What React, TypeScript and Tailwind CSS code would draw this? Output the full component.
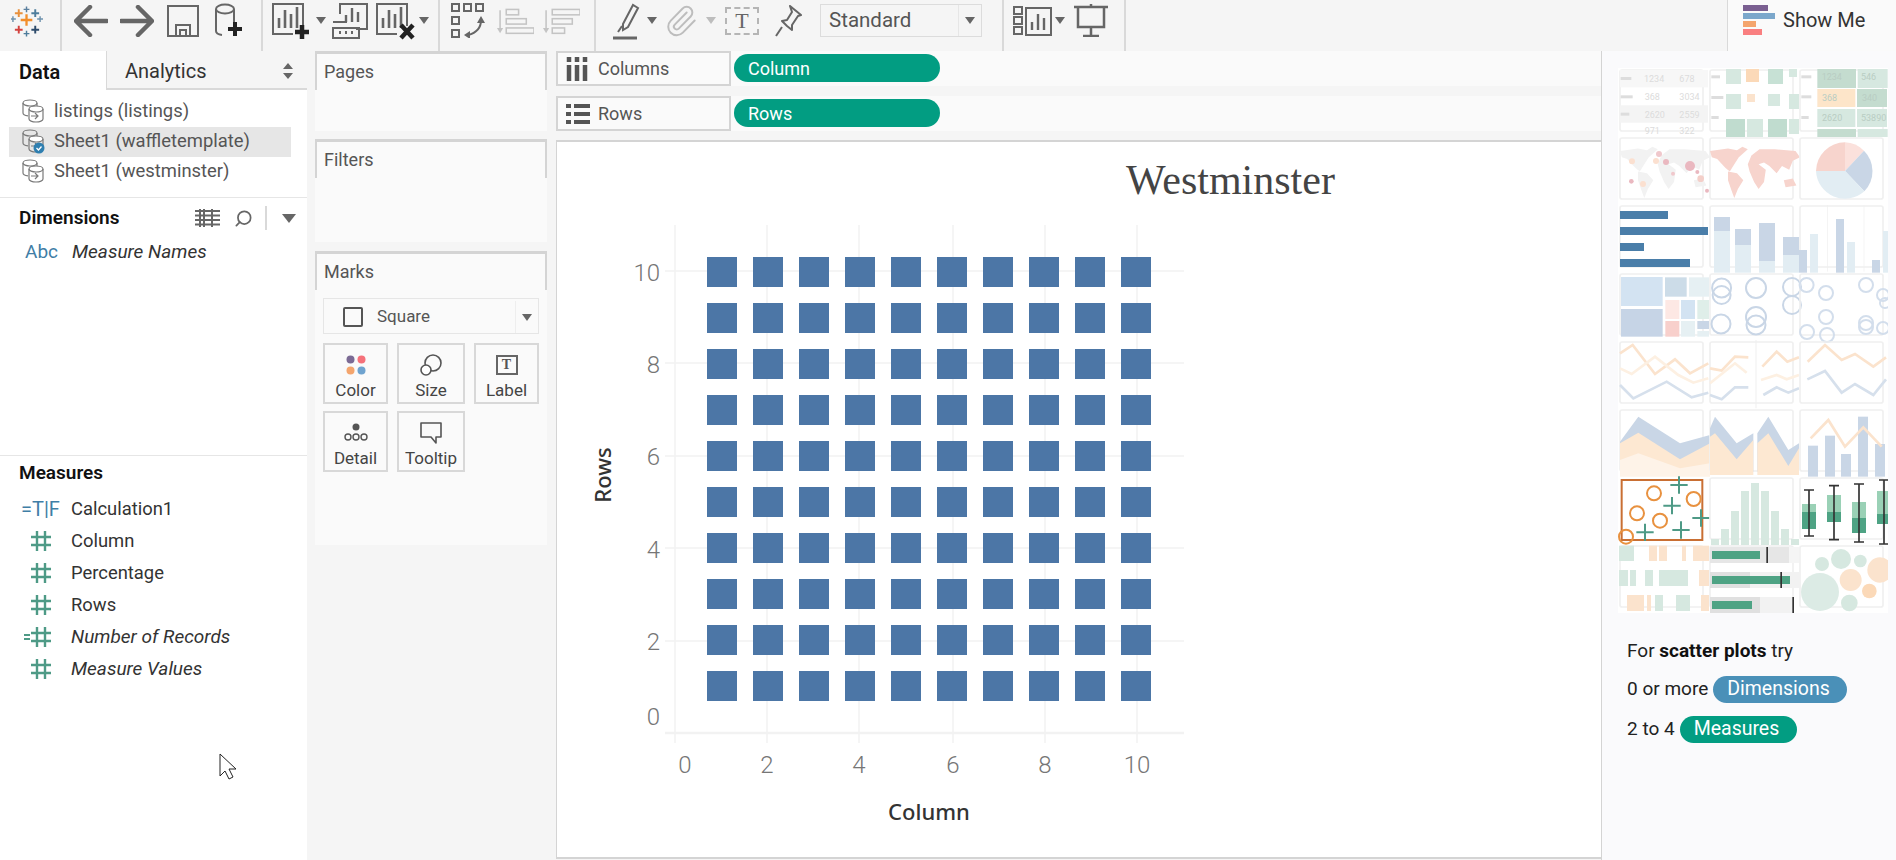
import type { ReactNode } from "react";
import { Paperclip, Search } from "lucide-react";

const GRAY = "#666666";

function Arrow({ color = GRAY }: { color?: string }) {
  return (
    <svg width="10" height="7" viewBox="0 0 10 7" className="shrink-0">
      <path d="M0 0h10L5 7z" fill={color} />
    </svg>
  );
}

function Logo() {
  const marks: [number, number, number, string, number][] = [
    [16, 6, 3, "#5a7f9e", 1.5],
    [8, 10, 4, "#e8903c", 2],
    [25, 10, 4, "#4e7d9c", 2],
    [2, 16, 3, "#6f93ae", 1.5],
    [16, 17, 6, "#f28e2b", 2.4],
    [30, 16, 3, "#6f93ae", 1.5],
    [8, 27, 4, "#d3423f", 2],
    [25, 27, 4, "#2d4b6b", 2],
    [16, 31, 3, "#4e7d9c", 1.5],
  ];
  return (
    <svg width="32" height="36" viewBox="0 0 33 36" className="ml-[11px]">
      {marks.map(([x, y, s, c, w]) => (
        <path key={`${x}-${y}`} d={`M${x - s} ${y}h${s * 2}M${x} ${y - s}v${s * 2}`} stroke={c} strokeWidth={w} fill="none" />
      ))}
    </svg>
  );
}

function ArrowIcon({ flip, className }: { flip?: boolean; className: string }) {
  return (
    <svg width="34" height="32" viewBox="0 0 34 32" className={className}>
      <path
        d={flip ? "M1 16h30M18 2l14 14-14 14" : "M33 16H3M16 2L2 16l14 14"}
        stroke={GRAY}
        strokeWidth="4.5"
        fill="none"
        strokeLinecap="round"
        strokeLinejoin="round"
      />
    </svg>
  );
}

function ChartBox({ extra, className }: { extra?: "plus" | "x"; className: string }) {
  return (
    <svg width="40" height="38" viewBox="0 0 40 38" className={className}>
      <path d="M31 24V2H1v30h20" stroke={GRAY} strokeWidth="2" fill="none" />
      <path d="M7 26V16M13 26V8M19 26V12M25 26V5" stroke={GRAY} strokeWidth="2.6" fill="none" />
      {extra === "plus" && <path d="M30 23v14M23 30h14" stroke="#222" strokeWidth="4.5" />}
      {extra === "x" && <path d="M25 23l12 13M37 23L25 36" stroke="#222" strokeWidth="4.5" />}
    </svg>
  );
}

function DuplicateIcon({ className }: { className: string }) {
  return (
    <svg width="36" height="36" viewBox="0 0 36 36" className={className}>
      <path d="M8 11V1h27v25H24" stroke={GRAY} strokeWidth="2" fill="none" />
      <path d="M14 19v-7M20 19V5M26 19V9" stroke={GRAY} strokeWidth="2.4" />
      <rect x="1" y="25" width="26" height="10" fill="none" stroke={GRAY} strokeWidth="2" />
      <path d="M1 19h14M8 31v-3M14 31v-3M20 31v-3" stroke={GRAY} strokeWidth="2" />
    </svg>
  );
}

function SortIcon({ flip, className }: { flip?: boolean; className: string }) {
  const bars = flip
    ? [
        [12, 3, 36],
        [12, 15, 26],
        [12, 27, 16],
      ]
    : [
        [12, 3, 16],
        [12, 15, 26],
        [12, 27, 36],
      ];
  return (
    <svg width="37" height="34" viewBox="0 0 48 36" className={className}>
      {bars.map(([x, y, w]) => (
        <rect key={y} x={x} y={y} width={w} height="7" fill="none" stroke="#c4c4c4" strokeWidth="2" />
      ))}
      <path d="M4 4v24" stroke="#c4c4c4" strokeWidth="2" />
      <path d="M0 27h8l-4 7z" fill="#c4c4c4" />
    </svg>
  );
}

function DataSourceIcon({ check }: { check?: boolean }) {
  return (
    <svg width="24" height="26" viewBox="0 0 24 26" className="shrink-0">
      <ellipse cx="9" cy="5" rx="7" ry="3" fill="none" stroke="#7a7a7a" strokeWidth="1.2" />
      <path d="M2 5v10c0 1.5 2 2.6 5 2.8M16 5v4" fill="none" stroke="#7a7a7a" strokeWidth="1.2" />
      <ellipse cx="15" cy="11" rx="7" ry="3" fill="white" stroke="#7a7a7a" strokeWidth="1.2" />
      <path d="M8 11v10c0 1.6 3 3 7 3s7-1.4 7-3V11" fill="none" stroke="#7a7a7a" strokeWidth="1.2" />
      <path d="M10 18h7M14 15l3 3-3 3" fill="none" stroke="#7a7a7a" strokeWidth="1.2" />
      {check && (
        <>
          <circle cx="18" cy="20" r="5.5" fill="#2f7fb0" />
          <path d="M15.5 20l2 2 3-3.5" stroke="white" strokeWidth="1.3" fill="none" />
        </>
      )}
    </svg>
  );
}

function HashIcon({ calc }: { calc?: boolean }) {
  return (
    <svg width="34" height="24" viewBox="0 0 34 24" className="shrink-0">
      {calc && <path d="M2 10h6M2 14h6" stroke="#4e9a86" strokeWidth="2" />}
      <path d="M15 2v20M23 2v20M9 8h20M9 16h20" stroke="#4e9a86" strokeWidth="2.4" />
    </svg>
  );
}

function Card({ title, className, children }: { title: string; className: string; children?: ReactNode }) {
  return (
    <div className={`bg-[#fafafa] ${className}`}>
      <div className="flex h-[39px] items-center border-x-2 border-t-[3px] border-[#d4d4d4] pb-[2px] pl-[7px] text-[18px] text-[#555555]">
        {title}
      </div>
      {children}
    </div>
  );
}

function MarkButton({ label, icon }: { label: string; icon: ReactNode }) {
  return (
    <div className="flex h-[61px] flex-col items-center border-2 border-[#d8d8d8] pt-[6px] text-[17px] leading-[22px] text-[#444444]">
      <div className="flex h-[28px] items-center">{icon}</div>
      {label}
    </div>
  );
}

function Shelf({ label, icon, pill }: { label: string; icon: ReactNode; pill: string }) {
  return (
    <div className="flex h-[35px] items-stretch bg-[#fafafa]">
      <div className="flex w-[175px] items-center border-2 border-[#d4d4d4] pl-[8px] text-[18px] text-[#555555]">
        <div className="w-[32px]">{icon}</div>
        {label}
      </div>
      <div className="ml-[3px] mt-[3px] flex h-[28px] w-[206px] items-center rounded-full bg-[#029d82] pl-[14px] text-[18px] text-white">
        {pill}
      </div>
    </div>
  );
}

const X_TICKS = [
  [0, 675, 685],
  [2, 767, 767],
  [4, 859, 859],
  [6, 953, 953],
  [8, 1045, 1045],
  [10, 1137, 1137],
];
const Y_TICKS = [
  [10, 271, 273],
  [8, 363, 365],
  [6, 456, 457],
  [4, 548, 550],
  [2, 641, 642],
  [0, 733, 717],
];

function WaffleChart() {
  const cells = Array.from({ length: 10 }, (_, i) => i);
  return (
    <svg width="620" height="640" viewBox="590 201 620 640" className="ml-[33px]">
      {X_TICKS.map(([v, x]) => (
        <path key={v} d={`M${x} 225V743`} stroke="#f2f2f2" strokeWidth="1.5" />
      ))}
      {Y_TICKS.map(([v, y]) => (
        <path key={v} d={`M665 ${y}H1184`} stroke="#f2f2f2" strokeWidth={v === 0 ? 2.5 : 1.5} />
      ))}
      {cells.map((r) =>
        cells.map((c) => <rect key={`${r}-${c}`} x={707 + 46 * c} y={257 + 46 * r} width="30" height="30" fill="#4c76a6" />),
      )}
      <g fontFamily="Roboto, sans-serif" fontWeight="300" fontSize="24" fill="#767676">
        {Y_TICKS.map(([v, , ty]) => (
          <text key={v} x="660" y={ty + 8} textAnchor="end">
            {v}
          </text>
        ))}
        {X_TICKS.map(([v, , tx]) => (
          <text key={v} x={tx} y="773" textAnchor="middle">
            {v}
          </text>
        ))}
      </g>
      <g fontFamily="'Noto Sans', sans-serif" fontWeight="500" fontSize="22" fill="#333333" textAnchor="middle">
        <text x="929" y="820">
          Column
        </text>
        <text transform="translate(611 475) rotate(-90)">Rows</text>
      </g>
    </svg>
  );
}

const O = "#fbe3cd";
const G = "#d6e8e0";
const B = "#c9d6e6";
const L = "#e2edf3";
const P = "#f7d4cd";

// thumbnails are drawn at 3x, in coordinates measured from the sidebar corner (x-1580, y)
function Thumb({ c, r, low, selected, children }: { c: number; r: number; low?: boolean; selected?: boolean; children?: ReactNode }) {
  const x = (40 + 90 * c) * 3;
  const y = (70 + 68 * r) * 3;
  return (
    <svg width="83" height="61" viewBox={`${x} ${y} 249 183`} className="overflow-visible">
      {!selected && <rect x={x} y={y} width="249" height="183" rx="6" fill="none" stroke="#f0f0f0" strokeWidth="5" />}
      <g transform={low ? "translate(60 900)" : undefined}>{children}</g>
    </svg>
  );
}

function Bars({ items }: { items: [number, number, number, number, string][] }) {
  return (
    <>
      {items.map(([x, y, w, h, f]) => (
        <rect key={`${x}-${y}-${w}`} x={x} y={y} width={w} height={h} fill={f} />
      ))}
    </>
  );
}

function Lines({ items }: { items: [string, string, number?][] }) {
  return (
    <>
      {items.map(([pts, color, w]) => (
        <polyline key={pts} points={pts} fill="none" stroke={color} strokeWidth={w ?? 8} />
      ))}
    </>
  );
}

function WorldMap({ x, fill }: { x: number; fill: string }) {
  return (
    <g transform={`translate(${x} 440) scale(2.7 2.65)`} fill={fill}>
      <path d="M0 5L20 2L30 4L36 0L42 3L32 12L27 20L22 28L17 24L8 14L2 12Z" />
      <path d="M20 28L30 30L37 38L31 48L27 58L24 50L20 38Z" />
      <path d="M46 10L55 3L72 3L95 5L100 12L92 16L88 26L80 22L74 30L66 22L60 18L54 20L62 26L60 40L54 48L49 40L44 28L42 20Z" />
      <path d="M82 38L92 36L96 44L84 46Z" />
    </g>
  );
}

function Gallery() {
  const tableText: [string, number, number][] = [
    ["1234", 192, 245],
    ["678", 298, 245],
    ["368", 194, 299],
    ["3034", 298, 299],
    ["2620", 194, 353],
    ["2559", 298, 353],
    ["971", 194, 401],
    ["322", 298, 401],
  ];
  const heatText: [string, number, number][] = [
    ["1234", 725, 240],
    ["546", 843, 240],
    ["368", 726, 304],
    ["340", 846, 304],
    ["2620", 726, 364],
    ["53890", 843, 364],
  ];
  const mapDots: [number, number, number, string][] = [
    [237, 462, 9, "#f0c8cc"],
    [258, 486, 9, "#eab8c0"],
    [330, 498, 15, "#eab8c0"],
    [352, 516, 6, "#eab8c0"],
    [362, 536, 10, "#f4cfc9"],
    [279, 521, 6, "#f0c8cc"],
    [154, 544, 7, "#eab8c0"],
    [381, 572, 6, "#eab8c0"],
    [156, 484, 9, "#fbe0d0"],
    [228, 483, 9, "#fbe0d0"],
    [189, 552, 9, "#fbe0d0"],
  ];
  const circles: [number, number, number][] = [
    [1721.6, 288, 9.5],
    [1721.6, 295, 9],
    [1756, 288, 10],
    [1792, 287, 9],
    [1721, 324, 9.5],
    [1756, 317, 10],
    [1756, 325, 9.5],
    [1792, 305, 9],
    [1806.6, 285, 7],
    [1826, 293, 7],
    [1866, 285, 7],
    [1883, 295, 6],
    [1826, 317, 7],
    [1807, 332, 7],
    [1827, 335, 7],
    [1866, 323, 7],
    [1866, 327, 7],
    [1883, 328, 6],
    [1885, 303, 5],
  ];
  const box: [number, number, number, number, number, number, number][] = [
    [606, 42, 612, 636, 687, 570, 708],
    [681, 42, 585, 636, 666, 557, 719],
    [756, 42, 606, 654, 699, 552, 726],
    [831, 42, 573, 642, 672, 540, 732],
  ];
  return (
    <div className="ml-[16px] h-[545px] w-[270px] overflow-hidden bg-white pl-[2px] pt-[2px]">
      <div className="grid grid-cols-[83px_83px_83px] gap-x-[7px] gap-y-[7px]">
        <Thumb c={0} r={0}>
          <Bars items={[[120, 210, 264, 52, "#f7f7f7"], [120, 316, 264, 52, "#f4f4f4"], [122, 231, 32, 9, "#dddddd"], [122, 286, 36, 9, "#dddddd"], [122, 338, 26, 9, "#dddddd"]]} />
          {tableText.map(([t, x, y]) => (
            <text key={t} x={x} y={y} fontSize="27" fill="#dcdcdc">
              {t}
            </text>
          ))}
        </Thumb>
        <Thumb c={1} r={0}>
          <Bars items={[[394, 226, 26, 9, "#dddddd"], [394, 288, 36, 9, "#dddddd"], [394, 348, 22, 9, "#dddddd"], [438, 207, 45, 45, G], [498, 207, 39, 39, "#fbd9b8"], [564, 207, 45, 45, "#c7e1d5"], [627, 207, 24, 24, G], [438, 282, 45, 45, G], [501, 282, 24, 24, O], [564, 282, 36, 36, G], [627, 282, 30, 45, G], [438, 357, 57, 54, "#c0dccf"], [501, 357, 48, 54, G], [564, 357, 57, 54, "#c0dccf"], [627, 357, 30, 45, G]]} />
        </Thumb>
        <Thumb c={2} r={0}>
          <Bars items={[[664, 226, 30, 9, "#dddddd"], [664, 286, 30, 9, "#dddddd"], [664, 348, 22, 9, "#dddddd"], [712, 207, 116, 57, "#c4dccf"], [833, 207, 90, 57, G], [712, 267, 114, 54, "#fde5c9"], [831, 267, 90, 54, "#c4dccf"], [712, 327, 114, 54, G], [831, 327, 90, 54, G], [712, 387, 116, 24, "#c4dccf"], [833, 387, 90, 24, G]]} />
          {heatText.map(([t, x, y]) => (
            <text key={t} x={x} y={y} fontSize="27" fill="#b9cdc3">
              {t}
            </text>
          ))}
        </Thumb>

        <Thumb c={0} r={1}>
          <WorldMap x={120} fill="#f2f2f2" />
          {mapDots.map(([x, y, d, f]) => (
            <circle key={`${x}-${y}`} cx={x} cy={y} r={d} fill={f} />
          ))}
        </Thumb>
        <Thumb c={1} r={1}>
          <WorldMap x={390} fill={P} />
        </Thumb>
        <Thumb c={2} r={1}>
          <path d="M795 513L795 427A87 87 0 0 0 708 513Z" fill={P} />
          <path d="M795 513L795 427A87 87 0 0 1 852 452Z" fill="#fbe1dc" />
          <path d="M795 513L852 452A87 87 0 0 1 853 574Z" fill={B} />
          <path d="M795 513L853 574A87 87 0 0 1 708 513Z" fill={L} />
        </Thumb>

        <Thumb c={0} r={2}>
          <Bars items={[[120, 633, 144, 24, "#4a7ea9"], [120, 681, 264, 24, "#4a7ea9"], [120, 729, 72, 24, "#4a7ea9"], [120, 777, 210, 24, "#4a7ea9"]]} />
        </Thumb>
        <Thumb c={1} r={2}>
          <Bars items={[[402, 651, 48, 42, B], [402, 693, 48, 125, L], [465, 687, 48, 48, B], [465, 735, 48, 83, L], [537, 669, 48, 114, B], [537, 783, 48, 35, L], [609, 711, 48, 54, B], [609, 765, 48, 53, L]]} />
        </Thumb>
        <Thumb c={2} r={2}>
          <Bars items={[[741, 615, 2, 200, "#efefef"], [851, 615, 2, 200, "#efefef"], [657, 750, 24, 68, B], [690, 702, 24, 116, L], [768, 657, 24, 161, B], [801, 726, 24, 92, L], [876, 780, 24, 38, B], [909, 693, 24, 125, L]]} />
        </Thumb>

        <Thumb c={0} r={3}>
          <Bars items={[[123, 831, 125, 87, "#d3e3f2"], [123, 927, 125, 83, "#c6d4e6"], [255, 832, 65, 58, "#ccdce8"], [327, 832, 60, 58, "#e6f0f3"], [256, 900, 42, 57, "#fde8e4"], [256, 963, 42, 47, "#f8d0cc"], [303, 900, 42, 57, "#d3e3f2"], [352, 900, 35, 57, "#dfeee9"], [303, 963, 42, 47, "#e6f0f3"], [352, 963, 35, 24, B], [352, 993, 35, 17, "#e6f0f3"]]} />
        </Thumb>
        <Thumb c={1} r={3}>
          <g transform="scale(3) translate(-1580 0)" fill="none" stroke={B} strokeWidth="2">
            {circles.slice(0, 8).map(([x, y, d]) => (
              <circle key={`${x}-${y}`} cx={x} cy={y} r={d} />
            ))}
          </g>
        </Thumb>
        <Thumb c={2} r={3}>
          <g transform="scale(3) translate(-1580 0)" fill="none" stroke="#d3deec" strokeWidth="2">
            {circles.slice(8).map(([x, y, d]) => (
              <circle key={`${x}-${y}`} cx={x} cy={y} r={d} />
            ))}
          </g>
        </Thumb>

        <Thumb c={0} r={4} low>
          <Lines items={[["60,160 98,135 165,222 225,178 270,220 325,190", O], ["60,205 95,222 165,170 235,225 280,248 325,235", "#fdf0e2"], ["60,255 100,295 200,245 275,292 325,278", "#d6e0ec"]]} />
        </Thumb>
        <Thumb c={1} r={4} low>
          <path d="M468 120V325" stroke="#efefef" strokeWidth="3" />
          <Lines items={[["330,205 365,212 405,170 445,172", O], ["330,250 405,190 440,218", "#fdf0e2"], ["330,285 365,298 405,262 445,262", "#d6e0ec"], ["487,200 530,155 562,185 597,172", O], ["483,240 530,225 560,238 597,225", "#fdf0e2"], ["490,285 530,262 565,278 597,265", "#d6e0ec"]]} />
        </Thumb>
        <Thumb c={2} r={4} low>
          <Lines items={[["623,185 675,135 725,180 765,162 820,200 858,172", O], ["622,238 675,213 725,278 765,252 820,285 858,238", "#d6e0ec"]]} />
        </Thumb>

        <Thumb c={0} r={5} low>
          <path d="M60 425L115 350L240 430L330 405V515H60Z" fill={B} />
          <path d="M60 430L115 398L240 478L330 430V525H60Z" fill="#fde8d2" />
          <path d="M60 480L115 460L240 505L330 490V530H60Z" fill="#fef3e8" />
        </Thumb>
        <Thumb c={1} r={5} low>
          <path d="M330 385L345 350L410 430L460 400V515H330Z" fill={B} />
          <path d="M330 410L345 400L410 478L460 420V525H330Z" fill="#fde8d2" />
          <path d="M472 400L505 350L565 450L597 430V515H472Z" fill={B} />
          <path d="M472 430L505 400L565 498L597 445V525H472Z" fill="#fde8d2" />
        </Thumb>
        <Thumb c={2} r={5} low>
          <Bars items={[[624, 437, 30, 93, B], [675, 407, 30, 123, B], [723, 462, 30, 68, B], [774, 350, 30, 180, B], [825, 432, 30, 98, B]]} />
          <Lines items={[["632,415 685,360 735,440 790,382 845,440", O]]} />
        </Thumb>

        <Thumb c={0} r={6} low selected>
          <rect x="65" y="540" width="242" height="180" fill="none" stroke="#c96f33" strokeWidth="6" />
          {[[162, 580], [281, 597], [111, 640], [180, 662], [78, 710]].map(([x, y]) => (
            <circle key={x} cx={x} cy={y} r="21" fill="none" stroke="#e8913f" strokeWidth="6" />
          ))}
          {[[237, 555], [216, 617], [135, 697], [243, 690], [303, 654]].map(([x, y]) => (
            <path key={x} d={`M${x - 26} ${y}h52M${x} ${y - 26}v52`} stroke="#4e9a86" strokeWidth="6" />
          ))}
        </Thumb>
        <Thumb c={1} r={6} low>
          <Bars items={[[333, 717, 24, 18, G], [363, 687, 24, 48, G], [393, 633, 24, 102, G], [423, 573, 24, 162, G], [453, 549, 24, 186, G], [483, 573, 24, 162, G], [513, 633, 24, 102, G], [543, 687, 24, 48, G], [573, 717, 24, 18, G]]} />
        </Thumb>
        <Thumb c={2} r={6} low>
          {box.map(([x, w, t, m, b, wt, wb]) => (
            <g key={x}>
              <rect x={x} y={t} width={w} height={m - t} fill="#9ad1b6" />
              <rect x={x} y={m} width={w} height={b - m} fill="#4ea384" />
              <path d={`M${x + 21} ${wt}V${wb}M${x + 6} ${wt}h30M${x + 6} ${wb}h30`} stroke="#333333" strokeWidth="5" fill="none" />
            </g>
          ))}
        </Thumb>

        <Thumb c={0} r={7} low>
          <Bars items={[[57, 737, 45, 46, G], [147, 737, 24, 46, O], [177, 737, 24, 46, O], [246, 737, 12, 46, O], [279, 737, 48, 46, O], [57, 810, 27, 48, G], [90, 810, 18, 48, G], [135, 810, 24, 48, G], [177, 810, 87, 48, G], [297, 810, 30, 48, O], [81, 885, 51, 48, O], [141, 885, 12, 48, O], [165, 885, 24, 48, G], [228, 885, 42, 48, G], [303, 885, 24, 48, O]]} />
        </Thumb>
        <Thumb c={1} r={7} low>
          <Bars items={[[330, 741, 237, 48, "#e6e6e6"], [567, 741, 30, 48, "#f5f5f5"], [336, 753, 144, 24, "#4ea384"], [499, 741, 5, 48, "#333333"], [330, 816, 120, 48, "#e0e0e0"], [450, 816, 147, 48, "#f2f2f2"], [336, 828, 234, 24, "#4ea384"], [541, 816, 5, 48, "#333333"], [330, 891, 150, 48, "#e0e0e0"], [480, 891, 98, 48, "#f2f2f2"], [336, 903, 120, 24, "#4ea384"], [577, 891, 5, 48, "#333333"]]} />
        </Thumb>
        <Thumb c={2} r={7} low>
          {([[723, 777, 30, G], [666, 792, 21, G], [781, 783, 19, G], [660, 876, 57, "#dcebe5"], [752, 840, 33, O], [840, 810, 38, O], [808, 873, 22, "#fbd9b8"], [748, 909, 25, G]] as [number, number, number, string][]).map(([x, y, d, f]) => (
            <circle key={x} cx={x} cy={y} r={d} fill={f} />
          ))}
        </Thumb>
      </div>
    </div>
  );
}

export default function App() {
  return (
    <div className="flex h-[860px] w-[1896px] flex-col overflow-hidden bg-white font-['Roboto',sans-serif] text-[18.4px] text-[#333333]">
      {/* toolbar */}
      <div className="flex h-[51px] shrink-0 items-center bg-[#f5f5f5]">
        <div className="flex h-full w-[62px] items-center border-r-2 border-[#d9d9d9] pb-[10px]">
          <Logo />
        </div>
        <div className="flex h-full w-[201px] items-center border-r-2 border-[#d9d9d9] pb-[10px]">
          <ArrowIcon className="ml-[12px]" />
          <ArrowIcon flip className="ml-[12px]" />
          <svg width="32" height="32" viewBox="0 0 32 32" className="ml-[13px]">
            <path d="M1 1h30v30H1zM9 31V20h14v11" fill="none" stroke={GRAY} strokeWidth="2" />
            <path d="M13 31v-6h6v6" fill="none" stroke={GRAY} strokeWidth="2" />
          </svg>
          <svg width="28" height="35" viewBox="0 0 28 35" className="ml-[16px]">
            <ellipse cx="10" cy="6" rx="9" ry="4.5" fill="none" stroke={GRAY} strokeWidth="2" />
            <path d="M1 6v22c0 2 2 3.500 6 4M19 6v14" fill="none" stroke={GRAY} strokeWidth="2" />
            <path d="M20 19v14M13 26h14" stroke="#222" strokeWidth="4" />
          </svg>
        </div>
        <div className="flex h-full w-[177px] items-center border-r-2 border-[#d9d9d9] pb-[10px]">
          <ChartBox extra="plus" className="ml-[9px]" />
          <div className="ml-[4px]">
            <Arrow />
          </div>
          <DuplicateIcon className="ml-[6px]" />
          <ChartBox extra="x" className="ml-[8px]" />
          <div className="ml-[3px]">
            <Arrow />
          </div>
        </div>
        <div className="flex h-full w-[156px] items-center border-r-2 border-[#d9d9d9] pb-[10px]">
          <svg width="36" height="35" viewBox="0 0 36 35" className="ml-[11px]">
            <g fill="none" stroke={GRAY} strokeWidth="2">
              <rect x="1" y="1" width="7" height="7" />
              <rect x="13" y="1" width="7" height="7" />
              <rect x="25" y="1" width="7" height="7" />
              <rect x="1" y="14" width="7" height="7" />
              <rect x="1" y="27" width="7" height="7" />
              <path d="M30 17c0 8-5 13-13 15" />
            </g>
            <path d="M26 20l4-7 4 7zM19 28v8l-6-4z" fill={GRAY} />
          </svg>
          <SortIcon className="ml-[10px]" />
          <SortIcon flip className="ml-[9px]" />
        </div>
        <div className="flex h-full w-[408px] items-center border-r-2 border-[#d9d9d9] pb-[10px]">
          <svg width="27" height="38" viewBox="0 0 27 38" className="ml-[17px]">
            <path d="M10 22L20 3l5 3-10 19-5 3z" fill="none" stroke={GRAY} strokeWidth="2" />
            <path d="M5 30l4-6" stroke={GRAY} strokeWidth="2" />
            <path d="M0 36h24" stroke={GRAY} strokeWidth="3" />
          </svg>
          <div className="ml-[7px]">
            <Arrow />
          </div>
          <Paperclip size={34} strokeWidth={1.4} color="#bdbdbd" className="ml-[7px]" />
          <div className="ml-[8px]">
            <Arrow color="#bdbdbd" />
          </div>
          <div className="ml-[9px] flex h-[28px] w-[34px] items-center justify-center border-2 border-dashed border-[#b5b5b5] font-['Liberation_Serif',serif] text-[22px] text-[#666666]">
            T
          </div>
          <svg width="28" height="32" viewBox="0 0 28 32" className="ml-[15px]">
            <path d="M16 1l11 9-3 1-6 9 0 5-5-4-5-5 5-1 5-8z" fill="none" stroke={GRAY} strokeWidth="2" strokeLinejoin="round" />
            <path d="M8 22L2 31" stroke={GRAY} strokeWidth="2" />
          </svg>
          <div className="ml-[18px] flex h-[33px] w-[162px] items-center border border-[#dcdcdc] pl-[8px] text-[20.5px] text-[#555555]">
            <span className="w-[129px]">Standard</span>
            <div className="flex h-full flex-1 items-center justify-center border-l border-[#e6e6e6]">
              <Arrow />
            </div>
          </div>
        </div>
        <div className="flex h-full w-[122px] items-center border-r-2 border-[#d9d9d9] pb-[10px]">
          <svg width="39" height="30" viewBox="0 0 39 30" className="ml-[9px]">
            <g fill="none" stroke={GRAY} strokeWidth="2">
              <rect x="1" y="1" width="8" height="7" />
              <rect x="1" y="11" width="8" height="7" />
              <rect x="1" y="21" width="8" height="7" />
              <rect x="13" y="2" width="25" height="27" />
              <path d="M19 24v-8M25 24V8M31 24V12" strokeWidth="2.4" />
            </g>
          </svg>
          <div className="ml-[3px]">
            <Arrow />
          </div>
          <svg width="34" height="33" viewBox="0 0 34 33" className="ml-[9px]">
            <path d="M0 3h34M4 3v20h26V3M17 0v3M17 23v9M9 32h16" fill="none" stroke={GRAY} strokeWidth="2.500" />
          </svg>
        </div>
        <div className="flex-1" />
        <div className="flex h-full w-[169px] items-center gap-[8px] border-l border-[#d9d9d9] bg-[#fafafa] pb-[11px] pl-[15px] text-[20px]">
          <div className="flex w-[32px] flex-col gap-[2px]">
            <div className="h-[6px] w-[25px] bg-[#7a5f91]" />
            <div className="h-[6px] w-[32px] bg-[#7ba7cb]" />
            <div className="h-[6px] w-[13px] bg-[#f4a56d]" />
            <div className="h-[6px] w-[19px] bg-[#f97f80]" />
          </div>
          Show Me
        </div>
      </div>

      <div className="flex min-h-0 flex-1">
        {/* data pane */}
        <div className="flex w-[307px] shrink-0 flex-col">
          <div className="flex h-[39px] shrink-0 text-[20px]">
            <div className="flex w-[107px] items-center border-r border-[#d9d9d9] pl-[19px] pt-[2px] font-semibold text-[#111111]">Data</div>
            <div className="flex flex-1 items-center justify-between border-b-2 border-[#d9d9d9] bg-[#f5f5f5] pl-[18px] pr-[13px] pt-[2px]">
              Analytics
              <svg width="12" height="16" viewBox="0 0 12 16">
                <path d="M6 0l5 6H1zM6 16l-5-6h10z" fill="#666666" />
              </svg>
            </div>
          </div>
          <div className="flex flex-col pt-[7px] text-[#555555]">
            {[
              ["listings (listings)", false],
              ["Sheet1 (waffletemplate)", true],
              ["Sheet1 (westminster)", false],
            ].map(([name, on]) => (
              <div key={String(name)} className={`ml-[9px] flex h-[30px] w-[282px] items-center gap-[9px] pb-[3px] pl-[12px] ${on ? "bg-[#e6e6e6]" : ""}`}>
                <DataSourceIcon check={Boolean(on)} />
                {name}
              </div>
            ))}
          </div>
          <div className="mt-[10px] flex h-[259px] shrink-0 flex-col border-y border-[#e6e6e6]">
            <div className="flex h-[40px] items-center pl-[19px] pr-[11px]">
              <span className="flex-1 text-[19px] font-semibold text-[#111111]">Dimensions</span>
              <svg width="25" height="18" viewBox="0 0 25 18">
                <path d="M0 2h25M0 6.500h25M0 11h25M0 15.500h25M5 0v18M9 0v18M17 0v18" stroke="#666666" strokeWidth="2" />
              </svg>
              <Search size={19} strokeWidth={2.2} color="#666666" className="ml-[14px] scale-x-[-1]" />
              <div className="ml-[12px] h-[24px] w-[2px] bg-[#d9d9d9]" />
              <div className="ml-[15px]">
                <svg width="14" height="9" viewBox="0 0 14 9">
                  <path d="M0 0h14L7 9z" fill="#666666" />
                </svg>
              </div>
            </div>
            <div className="flex h-[32px] items-center pb-[4px] text-[19px] italic text-[#333333]">
              <span className="w-[72px] pl-[25px] text-[19px] not-italic text-[#3f7ea6]">Abc</span>
              Measure Names
            </div>
          </div>
          <div className="flex h-[37px] shrink-0 items-center pb-[2px] pl-[19px] text-[19px] font-semibold text-[#111111]">Measures</div>
          <div className="flex h-[32px] items-center">
            <span className="w-[71px] pl-[21px] text-[20px] leading-none text-[#3f7ea6]">=T|F</span>
            Calculation1
          </div>
          {[
            ["Column", false],
            ["Percentage", false],
            ["Rows", false],
            ["Number of Records", true],
            ["Measure Values", false],
          ].map(([name, calc]) => (
            <div key={String(name)} className={`flex h-[32px] items-center ${name === "Number of Records" || name === "Measure Values" ? "text-[19px] italic" : ""}`}>
              <div className="ml-[22px] w-[49px]">
                <HashIcon calc={Boolean(calc)} />
              </div>
              {name}
            </div>
          ))}
          <div className="flex-1 pl-[219px] pt-[68px]">
            <svg width="19" height="27" viewBox="0 0 19 27">
              <path d="M1 1v22l5-5 4 8 4-2-4-8h7z" fill="white" stroke="#222222" strokeWidth="1" />
            </svg>
          </div>
        </div>

        {/* cards */}
        <div className="flex w-[249px] shrink-0 flex-col bg-[#f5f5f5] pl-[8px] pr-[9px]">
          <Card title="Pages" className="h-[80px] shrink-0" />
          <Card title="Filters" className="mt-[8px] h-[103px] shrink-0" />
          <Card title="Marks" className="mt-[9px] h-[294px] shrink-0">
            <div className="flex flex-col px-[8px] pt-[8px]">
              <div className="flex h-[36px] items-center border border-[#e6e6e6] pt-[2px] text-[17px] text-[#555555]">
                <div className="ml-[19px] h-[20px] w-[20px] rounded-[2px] border-2 border-[#555555]" />
                <span className="ml-[14px] w-[138px]">Square</span>
                <div className="flex h-full flex-1 items-center justify-center border-l border-[#eeeeee]">
                  <Arrow />
                </div>
              </div>
              <div className="mt-[9px] grid grid-cols-[65px_68px_65px] gap-x-[9px] gap-y-[7px]">
                <MarkButton
                  label="Color"
                  icon={
                    <svg width="20" height="20" viewBox="0 0 20 20">
                      <circle cx="4.500" cy="4.500" r="4" fill="#7b6a94" />
                      <circle cx="15.500" cy="4.500" r="4" fill="#f5717a" />
                      <circle cx="4.500" cy="15.500" r="4" fill="#f4a56d" />
                      <circle cx="15.500" cy="15.500" r="4" fill="#6fa3cf" />
                    </svg>
                  }
                />
                <MarkButton
                  label="Size"
                  icon={
                    <svg width="22" height="22" viewBox="0 0 22 22">
                      <circle cx="13" cy="9" r="8" fill="none" stroke="#555555" strokeWidth="1.6" />
                      <circle cx="6" cy="16" r="5" fill="white" stroke="#555555" strokeWidth="1.6" />
                    </svg>
                  }
                />
                <MarkButton
                  label="Label"
                  icon={
                    <div className="flex h-[20px] w-[22px] items-center justify-center border-2 border-[#666666] font-['Liberation_Serif',serif] text-[14px] font-bold leading-none text-[#555555]">
                      T
                    </div>
                  }
                />
                <MarkButton
                  label="Detail"
                  icon={
                    <svg width="24" height="20" viewBox="0 0 24 20">
                      <circle cx="12" cy="4" r="3.500" fill="#555555" />
                      <circle cx="4" cy="14" r="3" fill="none" stroke="#555555" strokeWidth="1.400" />
                      <circle cx="12" cy="14" r="3" fill="none" stroke="#555555" strokeWidth="1.400" />
                      <circle cx="20" cy="14" r="3" fill="none" stroke="#555555" strokeWidth="1.400" />
                    </svg>
                  }
                />
                <MarkButton
                  label="Tooltip"
                  icon={
                    <svg width="22" height="22" viewBox="0 0 22 22">
                      <path d="M1 1h20v14h-5v6l-5-6H1z" fill="none" stroke="#555555" strokeWidth="1.600" strokeLinejoin="round" />
                    </svg>
                  }
                />
              </div>
            </div>
          </Card>
        </div>

        {/* shelves and view */}
        <div className="flex w-[1045px] shrink-0 flex-col bg-[#f5f5f5]">
          <Shelf
            label="Columns"
            icon={
              <svg width="22" height="24" viewBox="0 0 22 24">
                <path d="M3 0v5M11 0v5M19 0v5M3 8v16M11 8v16M19 8v16" stroke="#555555" strokeWidth="4.500" />
              </svg>
            }
            pill="Column"
          />
          <div className="mt-[10px]">
            <Shelf
              label="Rows"
              icon={
                <svg width="24" height="22" viewBox="0 0 24 22">
                  <path d="M0 3h5M8 3h16M0 11h5M8 11h16M0 19h5M8 19h16" stroke="#555555" strokeWidth="4" />
                </svg>
              }
              pill="Rows"
            />
          </div>
          <div className="mt-[9px] flex h-[719px] shrink-0 flex-col border-y-2 border-l border-[#d4d4d4] bg-white">
            <div className="h-[59px] pl-[569px] pt-[14px] font-['Liberation_Serif',serif] text-[42px] leading-[48px] text-[#444444]">Westminster</div>
            <WaffleChart />
          </div>
        </div>

        {/* show me */}
        <div className="flex flex-1 flex-col border-l border-[#d4d4d4] bg-[#fafafc] pt-[17px] text-[19px]">
          <Gallery />
          <div className="ml-[25px] mt-[24px] flex h-[28px] items-center text-[#222222]">
            For&nbsp;<b className="font-bold text-[#111111]">scatter plots</b>&nbsp;try
          </div>
          <div className="ml-[25px] mt-[10px] flex h-[28px] items-center text-[#222222]">
            0 or more
            <span className="ml-[5px] flex h-[27px] w-[134px] items-center rounded-full bg-[#4a90b8] pl-[14px] text-[19.5px] text-white">Dimensions</span>
          </div>
          <div className="ml-[25px] mt-[12px] flex h-[28px] items-center text-[#222222]">
            2 to 4
            <span className="ml-[5px] flex h-[27px] w-[117px] items-center rounded-full bg-[#029d82] pl-[14px] text-[19.5px] text-white">Measures</span>
          </div>
        </div>
      </div>
    </div>
  );
}
